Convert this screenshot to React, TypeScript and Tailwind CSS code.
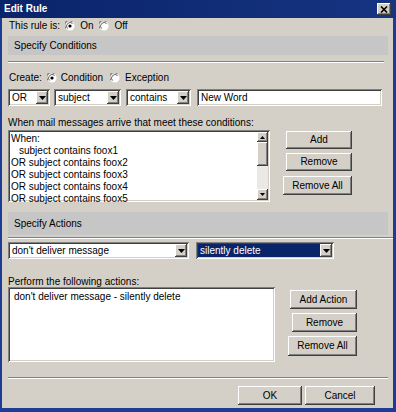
import React from "react";

const raised =
  "bg-[#d4d0c8] shadow-[inset_-1px_-1px_0_#404040,inset_1px_1px_0_#ffffff,inset_-2px_-2px_0_#808080]";
const sunken =
  "shadow-[inset_1px_1px_0_#808080,inset_-1px_-1px_0_#ffffff,inset_2px_2px_0_#404040,inset_-2px_-2px_0_#d4d0c8]";

function Radio({ checked }: { checked?: boolean }) {
  return (
    <svg width="10" height="10" viewBox="0 0 10 10" className="shrink-0">
      <circle cx="5" cy="5" r="4.5" fill="#ffffff" />
      <path d="M1 7.2 A4.2 4.2 0 0 1 7.2 1" stroke="#808080" strokeWidth="1.2" fill="none" />
      <path d="M2.6 7.6 A3 3 0 0 1 7.6 2.6" stroke="#404040" strokeWidth="0.8" fill="none" />
      {checked && <circle cx="5" cy="5" r="1.6" fill="#000000" />}
    </svg>
  );
}

function DownArrow() {
  return (
    <svg width="7" height="4" viewBox="0 0 7 4">
      <polygon points="0,0 7,0 3.5,4" fill="#000000" />
    </svg>
  );
}

function Select({ w, value, selected }: { w: string; value: string; selected?: boolean }) {
  return (
    <div className={`${w} h-[17px] bg-white ${sunken} flex p-[2px] shrink-0`}>
      <div
        className={`flex-1 flex items-center pl-[2px] ${
          selected ? "bg-[#0a246a] text-white" : ""
        }`}
      >
        {value}
      </div>
      <div className={`w-[12px] h-[13px] ${raised} flex items-center justify-center`}>
        <DownArrow />
      </div>
    </div>
  );
}

function Button({ w, h = "h-[19px]", label, className = "" }: { w: string; h?: string; label: string; className?: string }) {
  return (
    <div className={`${w} ${h} ${raised} flex items-center justify-center shrink-0 ${className}`}>
      {label}
    </div>
  );
}

function Band({ label, h }: { label: string; h: string }) {
  return <div className={`${h} bg-[#c6c6c6] flex items-center pl-[6px]`}>{label}</div>;
}

function Groove({ className = "" }: { className?: string }) {
  return <div className={`h-[2px] border-t border-b border-t-[#808080] border-b-white ${className}`} />;
}

function Scrollbar() {
  return (
    <div className="w-[11px] flex flex-col shrink-0">
      <div className={`h-[10px] ${raised} flex items-center justify-center`}>
        <svg width="5" height="3" viewBox="0 0 5 3">
          <polygon points="0,3 5,3 2.5,0" fill="#000000" />
        </svg>
      </div>
      <div className={`h-[24px] ${raised}`} />
      <div className="flex-1 bg-[#ebe9e5]" />
      <div className={`h-[11px] ${raised} flex items-center justify-center`}>
        <svg width="5" height="3" viewBox="0 0 5 3">
          <polygon points="0,0 5,0 2.5,3" fill="#000000" />
        </svg>
      </div>
    </div>
  );
}

const conditions = [
  { text: "When:", indent: false },
  { text: "subject contains foox1", indent: true },
  { text: "OR subject contains foox2", indent: false },
  { text: "OR subject contains foox3", indent: false },
  { text: "OR subject contains foox4", indent: false },
  { text: "OR subject contains foox5", indent: false },
];

export default function App() {
  return (
    <div className="w-[396px] h-[412px] flex flex-col bg-[#d4d0c8] text-[10px] leading-none text-black font-['Liberation_Sans',Arial,sans-serif] overflow-hidden">
      {/* title bar */}
      <div className="h-[18px] shrink-0 flex items-center pl-[4px] pr-[5px] bg-linear-to-r from-[#0a246a] to-[#163482]">
        <span className="flex-1 text-white font-bold text-[10px]">Edit Rule</span>
        <div className={`w-[14px] h-[12px] ${raised} flex items-center justify-center`}>
          <svg width="8" height="7" viewBox="0 0 8 7">
            <path d="M1 0.5 L7 6.5 M7 0.5 L1 6.5" stroke="#000000" strokeWidth="1.6" />
          </svg>
        </div>
      </div>

      <div className="flex-1 flex flex-col border-l-2 border-r-[3px] border-b-4 border-[#1d3c96] pl-[6px] pr-[5px]">
        {/* rule state */}
        <div className="h-[16px] flex items-center pl-[1px]">
          <span>This rule is:</span>
          <span className="ml-[5px]"><Radio checked /></span>
          <span className="ml-[5px]">On</span>
          <span className="ml-[6px]"><Radio /></span>
          <span className="ml-[5px]">Off</span>
        </div>

        <Band label="Specify Conditions" h="mt-[2px] h-[19px]" />
        <Groove className="mt-[6px] mr-[4px]" />

        <div className="mt-[6px] h-[17px] flex items-center pl-[1px]">
          <span>Create:</span>
          <span className="ml-[5px]"><Radio checked /></span>
          <span className="ml-[4px]">Condition</span>
          <span className="ml-[7px]"><Radio /></span>
          <span className="ml-[5px]">Exception</span>
        </div>

        <div className="mt-[3px] h-[17px] flex">
          <Select w="w-[42px]" value="OR" />
          <div className="ml-[4px]"><Select w="w-[67px]" value="subject" /></div>
          <div className="ml-[5px]"><Select w="w-[65px]" value="contains" /></div>
          <div className={`ml-[6px] w-[185px] h-[17px] bg-white ${sunken} flex items-center pl-[4px]`}>
            New Word
          </div>
        </div>

        <div className="mt-[11px] h-[12px] leading-[12px]">
          When mail messages arrive that meet these conditions:
        </div>

        <div className="mt-[1px] h-[72px] flex">
          <div className={`w-[262px] h-full bg-white ${sunken} p-[2px] flex`}>
            <div className="flex-1 pt-[1px] pl-[1px]">
              {conditions.map((c) => (
                <div key={c.text} className={`h-[12px] leading-[12px] ${c.indent ? "pl-[8px]" : ""}`}>
                  {c.text}
                </div>
              ))}
            </div>
            <Scrollbar />
          </div>
          <div className="ml-[13px] w-[69px] flex flex-col items-end pt-[1px]">
            <Button w="w-[66px]" h="h-[18px]" label="Add" />
            <Button w="w-[66px]" h="h-[18px]" label="Remove" className="mt-[4px]" />
            <Button w="w-[69px]" h="h-[19px]" label="Remove All" className="mt-[5px]" />
          </div>
        </div>

        <Band label="Specify Actions" h="mt-[10px] h-[23px]" />
        <Groove className="mt-[2px] -mr-[5px]" />

        <div className="mt-[3px] h-[17px] flex">
          <Select w="w-[181px]" value="don't deliver message" />
          <div className="ml-[7px]"><Select w="w-[138px]" value="silently delete" selected /></div>
        </div>

        <div className="mt-[17px] h-[11px] leading-[11px]">Perform the following actions:</div>

        <div className="h-[75px] flex">
          <div className={`w-[267px] h-full bg-white ${sunken} pt-[4px] pl-[6px]`}>
            <div className="h-[12px] leading-[12px]">don't deliver message - silently delete</div>
          </div>
          <div className="ml-[13px] w-[69px] flex flex-col items-end pt-[3px]">
            <Button w="w-[67px]" label="Add Action" />
            <Button w="w-[65px]" label="Remove" className="mt-[4px]" />
            <Button w="w-[69px]" h="h-[20px]" label="Remove All" className="mt-[4px]" />
          </div>
        </div>

        <Groove className="mt-[15px]" />

        <div className="mt-[7px] h-[19px] flex justify-end pr-[13px]">
          <Button w="w-[64px]" label="OK" />
          <Button w="w-[70px]" label="Cancel" className="ml-[3px]" />
        </div>
      </div>
    </div>
  );
}
